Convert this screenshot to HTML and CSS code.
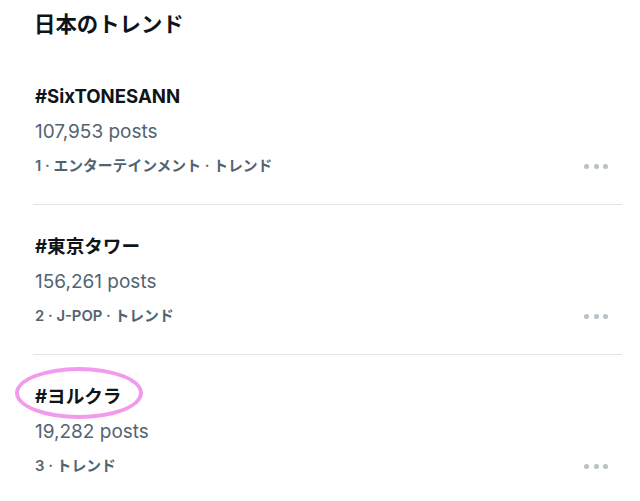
FILE: index.html
```html
<!DOCTYPE html>
<html lang="ja">
<head>
<meta charset="utf-8">
<link rel="stylesheet" href="styles.css">
</head>
<body>
<div class="page">
  <header class="header"><h1 class="title">日本のトレンド</h1></header>
  <ul class="list">
    <li class="item">
      <div class="tag">#SixTONESANN</div>
      <div class="posts">107,953 posts</div>
      <div class="meta"><span>1 · エンターテインメント · トレンド</span><span class="more"><i></i><i></i><i></i></span></div>
    </li>
    <li class="item">
      <div class="tag">#東京タワー</div>
      <div class="posts">156,261 posts</div>
      <div class="meta"><span>2 · J-POP · トレンド</span><span class="more"><i></i><i></i><i></i></span></div>
    </li>
    <li class="item last">
      <div class="tag circled">#ヨルクラ<span class="ring"></span></div>
      <div class="posts">19,282 posts</div>
      <div class="meta"><span>3 · トレンド</span><span class="more"><i></i><i></i><i></i></span></div>
    </li>
  </ul>
</div>
</body>
</html>
```
FILE: styles.css
```css
html, body {
  margin: 0;
  padding: 0;
  background: #ffffff;
}
body {
  font-family: Inter, "Noto Sans CJK JP", sans-serif;
  color: #0f1419;
  overflow: hidden;
}
.page {
  width: 640px;
  height: 501px;
}
.header {
  padding: 6.5px 0 13.5px 34px;
}
.title {
  margin: 0;
  font-size: 21.4px;
  line-height: 35px;
  font-weight: 700;
}
.list {
  list-style: none;
  margin: 0 18px 0 33px;
  padding: 0;
}
.item {
  padding: 23.5px 0 20.5px 2px;
  border-bottom: 1px solid #e1e4e6;
}
.item.last {
  border-bottom: none;
}
.item > div {
  line-height: 35px;
  height: 35px;
}
.tag {
  font-size: 18.6px;
  font-weight: 700;
}
.posts {
  font-size: 19px;
  color: #536471;
}
.meta {
  font-size: 14.8px;
  font-weight: 600;
  color: #536471;
  display: flex;
  justify-content: space-between;
  align-items: center;
}
.more {
  display: flex;
  gap: 4.5px;
  padding-right: 14px;
}
.more i {
  display: block;
  width: 5px;
  height: 5px;
  border-radius: 50%;
  background: #b9c0c6;
}
.circled {
  position: relative;
}
.ring {
  position: absolute;
  left: -20px;
  top: -12px;
  width: 120px;
  height: 44px;
  border: 4px solid #f29bec;
  border-radius: 50%;
}
```
